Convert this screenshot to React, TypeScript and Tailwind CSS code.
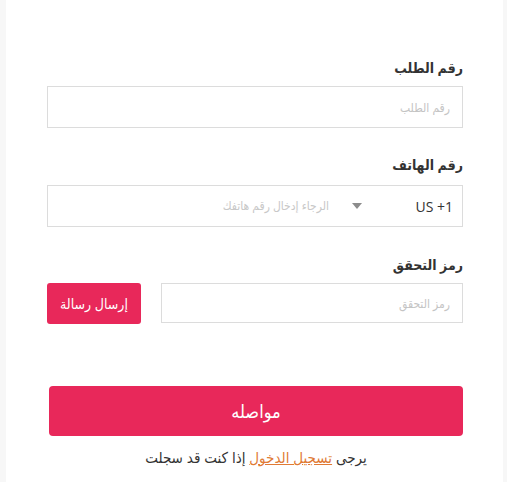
function Field(props: { label: string; children: React.ReactNode; className?: string }) {
  return (
    <div className={props.className}>
      <p className="text-[14px] font-bold leading-5 text-[#333]">{props.label}</p>
      {props.children}
    </div>
  )
}

export default function App() {
  return (
    <div
      className="flex min-h-[482px] bg-[#f7f7f7] pl-[6px] pr-[4px]"
      style={{ fontFamily: '"Open Sans", "DejaVu Sans Condensed", "DejaVu Sans", sans-serif' }}>
      <main dir="rtl" className="min-h-[482px] flex-1 bg-white pl-[41px] pr-[40px] pt-[58px]">
        <Field label="رقم الطلب">
          <input
            className="mt-[8px] block h-[42px] w-full border border-[#dcdcdc] px-[12px] text-[12px] outline-none placeholder:text-[#c4c4c4]"
            placeholder="رقم الطلب"
          />
        </Field>

        <Field label="رقم الهاتف" className="mt-[27px]">
          <div className="mt-[10px] flex h-[42px] items-center border border-[#dcdcdc]">
            <span dir="ltr" className="w-[52px] pr-[9px] text-right text-[14px] text-[#333]">
              US +1
            </span>
            <span className="flex w-[58px] justify-end">
              <svg width="10" height="6" viewBox="0 0 10 6">
                <path d="M0 0 L10 0 L5 6 Z" fill="#8c8c8c" />
              </svg>
            </span>
            <input
              className="ml-[8px] flex-1 pr-[23px] text-[12px] outline-none placeholder:text-[#c8c8c8]"
              placeholder="الرجاء إدخال رقم هاتفك"
            />
          </div>
        </Field>

        <Field label="رمز التحقق" className="mt-[28px]">
          <div className="mt-[8px] flex items-start gap-[20px]">
            <input
              className="block h-[40px] flex-1 border border-[#dcdcdc] px-[12px] text-[12px] outline-none placeholder:text-[#c4c4c4]"
              placeholder="رمز التحقق"
            />
            <button className="h-[41px] w-[94px] rounded-[3px] bg-[#e8285a] text-[14px] text-white">
              إرسال رسالة
            </button>
          </div>
        </Field>

        <button className="mt-[62px] block h-[50px] w-[414px] rounded-[4px] bg-[#e8285a] text-[18px] text-white">
          مواصله
        </button>

        <p className="mt-[10px] w-[414px] text-center text-[15px] text-[#333]">
          يرجى{" "}
          <a href="#" className="text-[#e07a35] underline">
            تسجيل الدخول
          </a>{" "}
          إذا كنت قد سجلت
        </p>
      </main>
    </div>
  )
}
